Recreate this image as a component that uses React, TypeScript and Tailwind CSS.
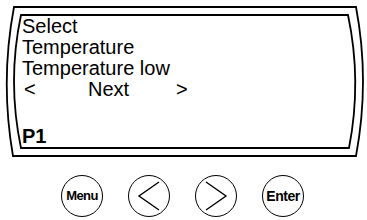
import React from "react";

function Bezel() {
  return (
    <svg
      className="absolute inset-0"
      width="367"
      height="160"
      viewBox="0 0 367 160"
      fill="none"
      stroke="#000"
      strokeWidth="1.8"
    >
      <path d="M14,7 L356,7 Q370,81 356,156 L13,156 Q0,81 14,7 Z" />
      <path d="M21,15 L348,15 Q362,81 349,148 L21,148 Q7,81 21,15 Z" />
    </svg>
  );
}

function Chevron({ dir }: { dir: "left" | "right" }) {
  return (
    <svg width="24" height="30" viewBox="0 0 24 30" fill="none" stroke="#000" strokeWidth="1.4">
      {dir === "left" ? <path d="M22,1 L2,15 L22,29" /> : <path d="M2,1 L22,15 L2,29" />}
    </svg>
  );
}

export default function App() {
  return (
    <div className="w-[367px] h-[220px] bg-white text-black overflow-hidden font-['Liberation_Sans',Arial,sans-serif]">
      {/* display */}
      <div className="relative h-[160px]">
        <Bezel />
        <div className="relative pl-[22px] pt-[16px] text-[20px] leading-[21px]">
          <div>Select</div>
          <div>Temperature</div>
          <div>Temperature low</div>
          <div className="flex">
            <span className="w-[66px] pl-[2px]">&lt;</span>
            <span className="w-[88px]">Next</span>
            <span>&gt;</span>
          </div>
          <div className="mt-[26px] font-bold">P1</div>
        </div>
      </div>

      {/* keys */}
      <div className="flex gap-[25px] pl-[61px] mt-[15px]">
        <div className="w-[42px] h-[42px] rounded-full border-[1.5px] border-black flex items-center justify-center">
          <span className="text-[13px] font-bold tracking-[-0.6px]">Menu</span>
        </div>
        <div className="w-[42px] h-[42px] rounded-full border-[1.5px] border-black flex items-center justify-center">
          <Chevron dir="left" />
        </div>
        <div className="w-[42px] h-[42px] rounded-full border-[1.5px] border-black flex items-center justify-center">
          <Chevron dir="right" />
        </div>
        <div className="w-[42px] h-[42px] rounded-full border-[1.5px] border-black flex items-center justify-center">
          <span className="text-[14px] font-bold tracking-[-0.5px]">Enter</span>
        </div>
      </div>
    </div>
  );
}
